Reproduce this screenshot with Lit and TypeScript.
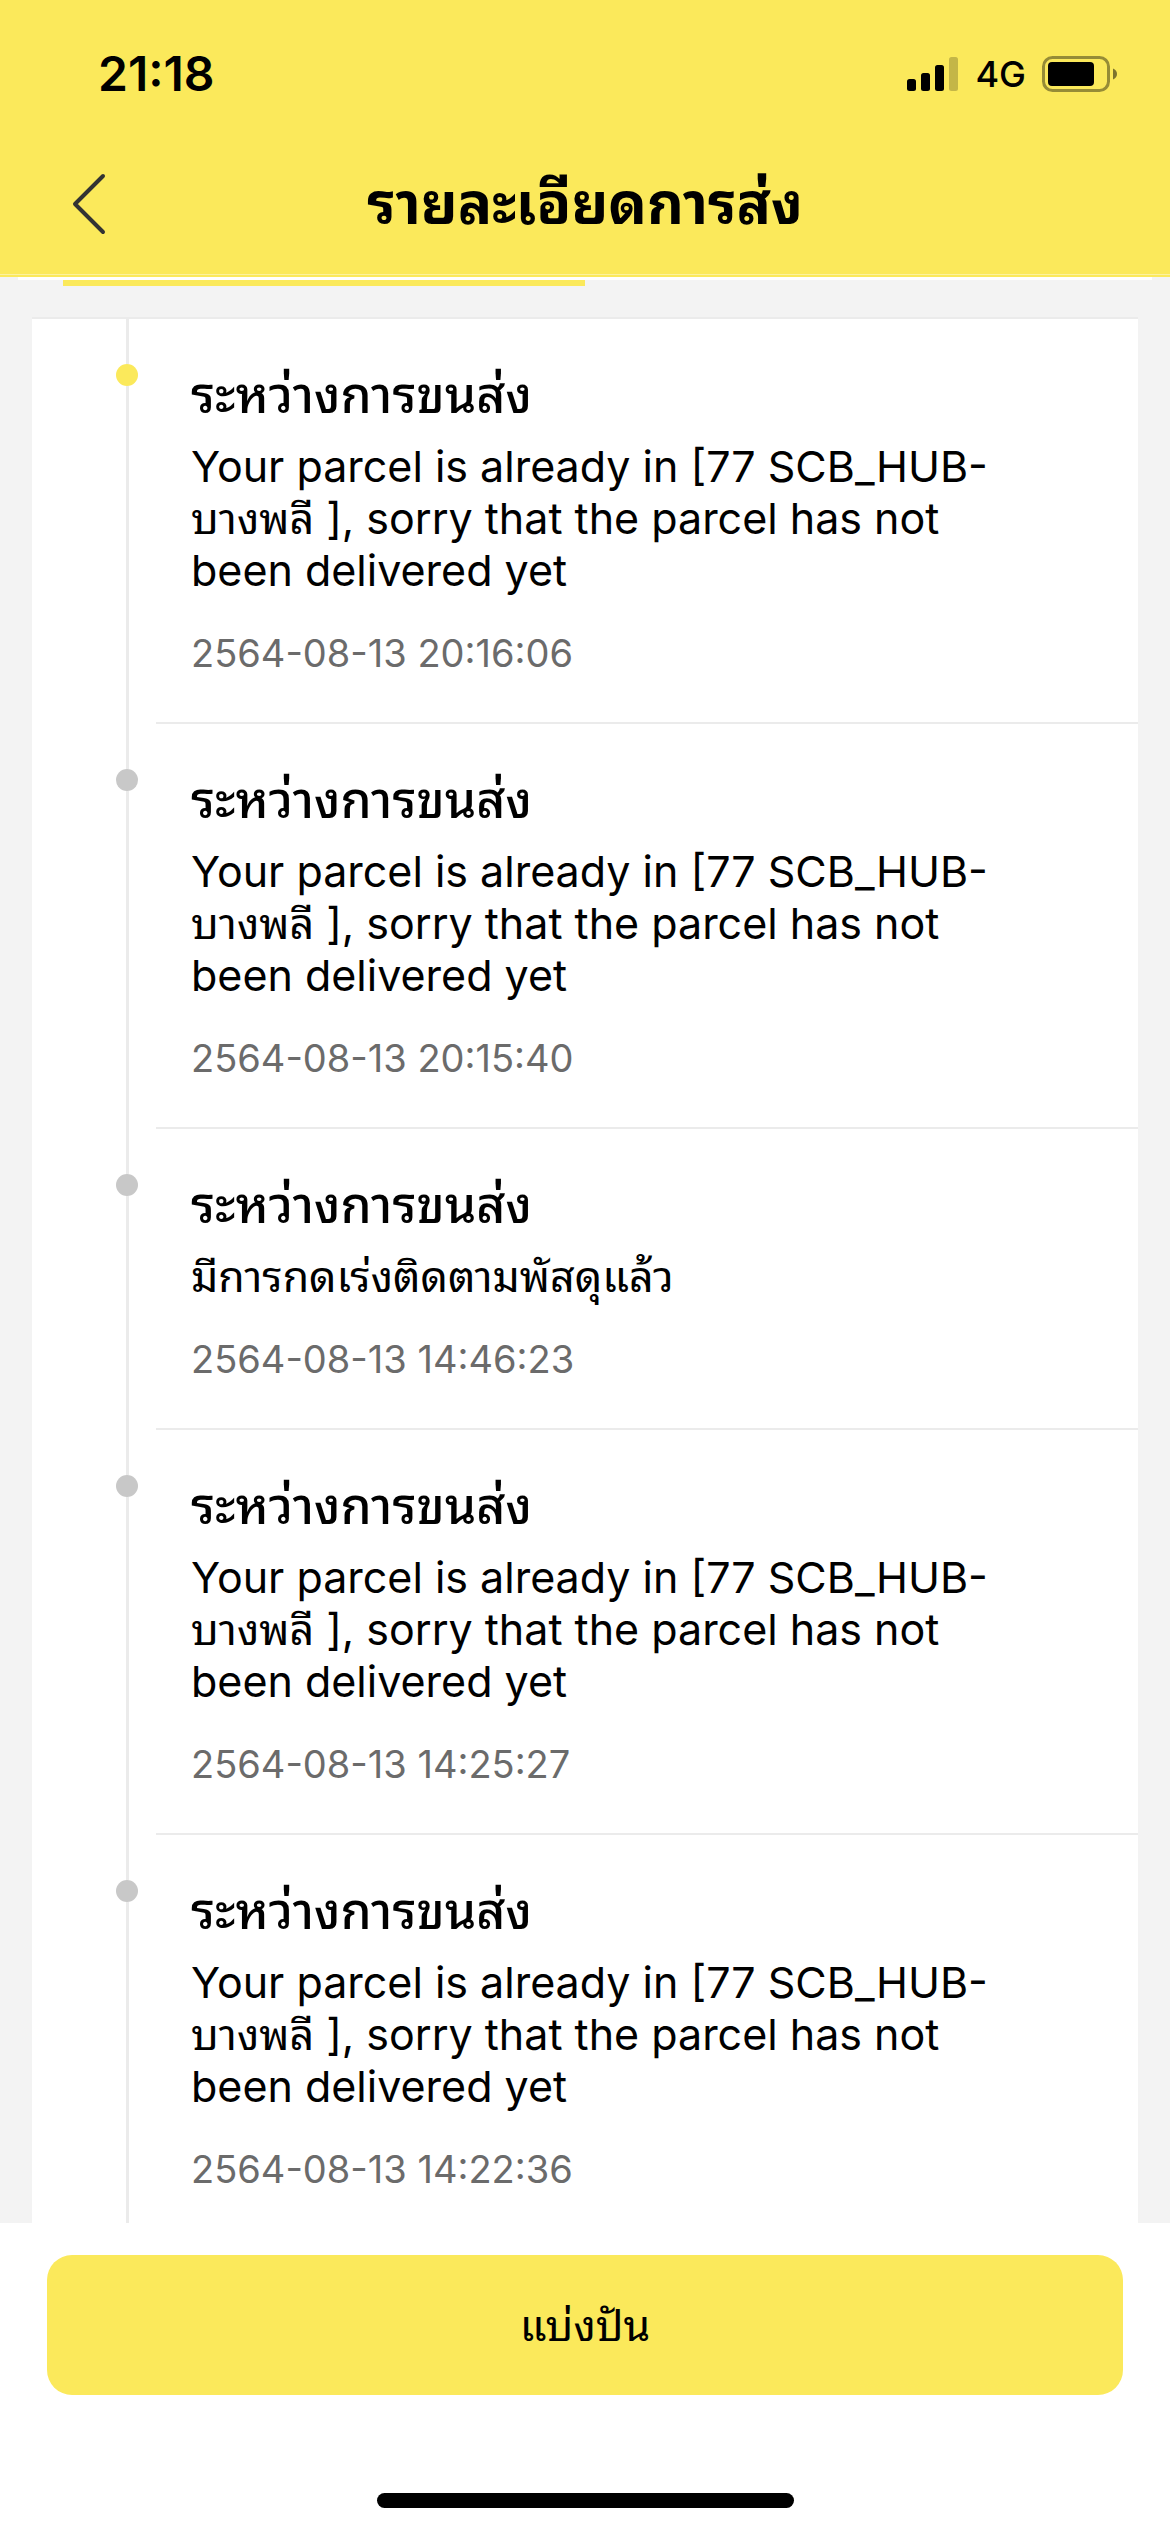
import { LitElement, html, css } from "lit";
import { customElement, property } from "lit/decorators.js";

interface TrackingEvent {
  status: string;
  detail: string;
  time: string;
}

const STATUS = "ระหว่างการขนส่ง";
const AT_HUB =
  "Your parcel is already in [77 SCB_HUB-บางพลี ], sorry that the parcel has not been delivered yet";

const EVENTS: TrackingEvent[] = [
  { status: STATUS, detail: AT_HUB, time: "2564-08-13 20:16:06" },
  { status: STATUS, detail: AT_HUB, time: "2564-08-13 20:15:40" },
  { status: STATUS, detail: "มีการกดเร่งติดตามพัสดุแล้ว", time: "2564-08-13 14:46:23" },
  { status: STATUS, detail: AT_HUB, time: "2564-08-13 14:25:27" },
  { status: STATUS, detail: AT_HUB, time: "2564-08-13 14:22:36" },
];

@customElement("status-bar")
class StatusBar extends LitElement {
  static styles = css`
    :host {
      display: flex;
      align-items: center;
      justify-content: space-between;
      height: 148px;
      padding: 0 52px 0 98px;
      box-sizing: border-box;
    }
    .clock {
      font-size: 48px;
      line-height: 52px;
      font-weight: 600;
    }
    .indicators {
      display: flex;
      align-items: center;
      gap: 16px;
    }
    .network {
      font-size: 36px;
      line-height: 44px;
      font-weight: 500;
    }
    .icon {
      display: block;
    }
  `;

  render() {
    return html`
      <span class="clock">21:18</span>
      <div class="indicators">
        <svg class="icon" width="52" height="36" viewBox="0 0 52 36" aria-hidden="true">
          <rect x="0" y="23" width="9" height="12" rx="2.5" />
          <rect x="14" y="17" width="9" height="18" rx="2.5" />
          <rect x="28" y="9" width="9" height="26" rx="2.5" />
          <rect x="42" y="1" width="9" height="34" rx="2.5" opacity="0.22" />
        </svg>
        <span class="network">4G</span>
        <svg class="icon" width="76" height="36" viewBox="0 0 76 36" aria-hidden="true">
          <rect x="1.5" y="1.5" width="65" height="33" rx="9" fill="none" stroke="#000" stroke-width="3" opacity="0.4" />
          <rect x="6" y="6" width="46" height="24" rx="4" />
          <path d="M71 12.5c2.6 1 4 3 4 5.500s-1.400 4.500-4 5.500z" opacity="0.5" />
        </svg>
      </div>
    `;
  }
}

@customElement("tracking-item")
class TrackingItem extends LitElement {
  @property({ attribute: false }) event!: TrackingEvent;
  @property({ type: Boolean, reflect: true }) latest = false;

  static styles = css`
    :host {
      display: grid;
      grid-template-columns: 124px 1fr;
    }
    :host([latest]) {
      background: linear-gradient(#ebebeb 2px, transparent 2px);
    }
    .rail {
      display: flex;
      flex-direction: column;
      align-items: center;
      width: 22px;
      margin-left: 84px;
    }
    .line {
      width: 3px;
      height: 47px;
      background: #ebebeb;
    }
    .rest {
      flex: 1;
    }
    .dot {
      width: 22px;
      height: 22px;
      border-radius: 50%;
      background: #c8c8c8;
    }
    .current {
      background: #fbe95b;
    }
    .content {
      border-top: 2px solid #ebebeb;
      padding: 46px 130px 44px 35px;
    }
    .status {
      margin: 0 0 15px;
      font-size: 50px;
      line-height: 60px;
      font-weight: 500;
    }
    .detail {
      margin: 0 0 32px;
      font-size: 43px;
      line-height: 52px;
    }
    .time {
      display: block;
      font-size: 38px;
      line-height: 50px;
      color: #6b6b6b;
    }
  `;

  render() {
    return html`
      <div class="rail">
        <span class="line"></span>
        <span class="dot ${this.latest ? "current" : ""}"></span>
        <span class="line rest"></span>
      </div>
      <div class="content">
        <h2 class="status">${this.event.status}</h2>
        <p class="detail">${this.event.detail}</p>
        <time class="time">${this.event.time}</time>
      </div>
    `;
  }
}

@customElement("app-root")
class AppRoot extends LitElement {
  static styles = css`
    :host {
      display: flex;
      flex-direction: column;
      height: 100vh;
      background: #fff;
      color: #000;
      font-family: Inter, "Noto Sans Thai Looped", Loma, Garuda, Waree, Umpush, Sarabun, sans-serif;
    }
    .top {
      background: linear-gradient(to top, #fbe95b 2px, #fcf2a0 2px, #fcf2a0 3px, #fbe95b 3px);
    }
    .nav {
      display: grid;
      grid-template-columns: 120px 1fr 120px;
      align-items: center;
      height: 129px;
      padding-bottom: 17px;
      box-sizing: border-box;
    }
    .back {
      justify-self: end;
      display: flex;
      padding: 12px 14px;
      border: 0;
      background: none;
    }
    .title {
      margin: 0;
      text-align: center;
      font-size: 57px;
      line-height: 72px;
      font-weight: 700;
    }
    .main {
      flex: 1;
      min-height: 0;
      overflow-y: auto;
      scrollbar-width: none;
      background: #f3f3f3;
    }
    .tabs {
      height: 9px;
      padding: 0 63px;
      background: linear-gradient(#fff, #fff) top / calc(100% - 36px) 3px no-repeat;
      display: flex;
      align-items: flex-end;
    }
    .marker {
      width: 50%;
      height: 6px;
      background: #fbe95b;
    }
    .card {
      margin: 31px 32px 0;
      padding: 0;
      background: #fff;
      list-style: none;
    }
    .footer {
      display: flex;
      flex-direction: column;
      align-items: center;
      padding: 32px 47px 24px;
    }
    .share {
      width: 100%;
      height: 140px;
      border: 0;
      border-radius: 25px;
      background: #fbe95b;
      color: #000;
      font-family: inherit;
      font-size: 43px;
      line-height: 52px;
    }
    .home {
      width: 417px;
      height: 15px;
      margin-top: 98px;
      border-radius: 8px;
      background: #000;
    }
  `;

  render() {
    return html`
      <header class="top">
        <status-bar></status-bar>
        <div class="nav">
          <button class="back" aria-label="ย้อนกลับ">
            <svg width="34" height="62" viewBox="0 0 34 62" fill="none" stroke="#333" stroke-width="4" stroke-linecap="round" stroke-linejoin="round" aria-hidden="true">
              <path d="M31 3L3 31L31 59" />
            </svg>
          </button>
          <h1 class="title">รายละเอียดการส่ง</h1>
        </div>
      </header>
      <main class="main">
        <div class="tabs"><div class="marker"></div></div>
        <ol class="card">
          ${EVENTS.map(
            (event, i) => html`<li><tracking-item .event=${event} ?latest=${i === 0}></tracking-item></li>`
          )}
        </ol>
      </main>
      <footer class="footer">
        <button class="share">แบ่งปัน</button>
        <div class="home"></div>
      </footer>
    `;
  }
}
